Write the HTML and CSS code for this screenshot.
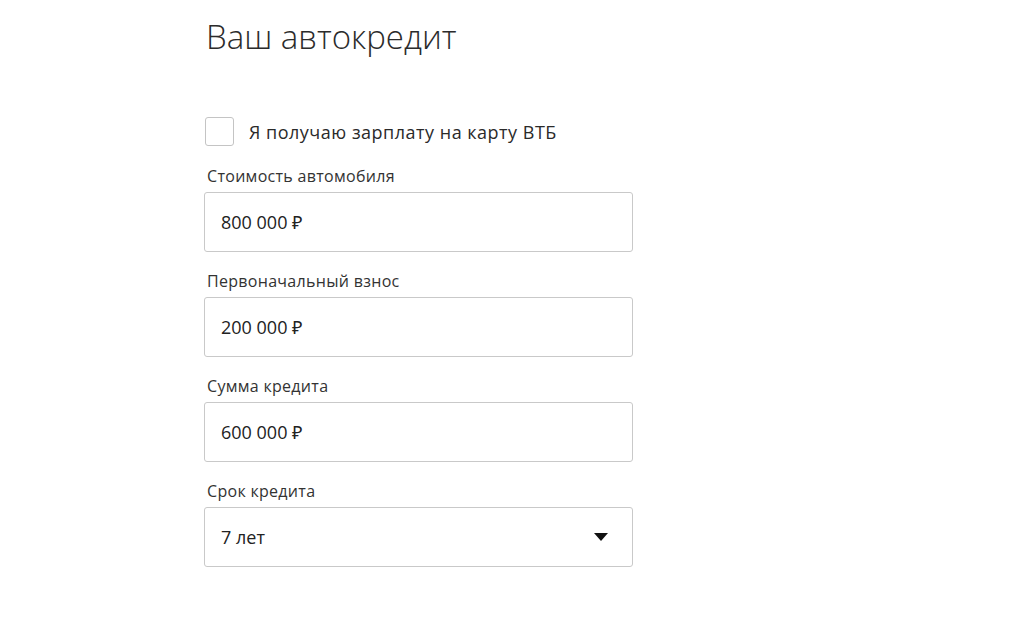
FILE: index.html
```html
<!DOCTYPE html>
<html lang="ru">
<head>
    <meta charset="UTF-8">
    <meta name="viewport" content="width=device-width, initial-scale=1.0">
    <link rel="stylesheet" href="styles.css">
    <title>Ваш автокредит</title>
</head>
<body>
    <div class="calc">
        <h1 class="title">Ваш автокредит</h1>

        <label class="check">
            <span class="box"></span>
            <span class="checkText">Я получаю зарплату на карту ВТБ</span>
        </label>

        <div class="field">
            <div class="label">Стоимость автомобиля</div>
            <div class="input">800 000 ₽</div>
        </div>
        <div class="field">
            <div class="label">Первоначальный взнос</div>
            <div class="input">200 000 ₽</div>
        </div>
        <div class="field">
            <div class="label">Сумма кредита</div>
            <div class="input">600 000 ₽</div>
        </div>
        <div class="field">
            <div class="label">Срок кредита</div>
            <div class="input select">
                <span>7 лет</span>
                <svg class="caret" width="14" height="8" viewBox="0 0 14 8"><path d="M0 0 L14 0 L7 8 Z" fill="#111"/></svg>
            </div>
        </div>
    </div>
</body>
</html>
```

FILE: styles.css
```css
*{
    box-sizing: border-box;
}
body{
    margin: 0;
    padding: 0;
    background-color: #fff;
    color: #222;
    font-family: 'Open Sans', 'Noto Sans', sans-serif;
}

.calc{
    display: flex;
    flex-direction: column;
    padding-left: 204px;
    width: 633px;
}
.title{
    margin: 14px 0 0 2px;
    font-size: 33px;
    font-weight: 300;
    line-height: 46px;
    color: #2b2b2b;
}

.check{
    display: flex;
    align-items: center;
    margin-top: 57px;
    margin-left: 1px;
}
.box{
    width: 29px;
    height: 29px;
    border: 1px solid #c4c4c4;
    border-radius: 3px;
}
.checkText{
    margin-left: 15px;
    font-size: 18px;
    letter-spacing: 0.5px;
    color: #2a2a2a;
}

.field{
    display: flex;
    flex-direction: column;
    margin-top: 19px;
}
.check + .field{
    margin-top: 20px;
}
.label{
    margin-left: 3px;
    font-size: 16px;
    letter-spacing: 0.3px;
    line-height: 20px;
    color: #333;
    margin-bottom: 6px;
}
.input{
    display: flex;
    align-items: center;
    justify-content: space-between;
    width: 429px;
    height: 60px;
    padding: 0 24px 0 16px;
    border: 1px solid #c9c9c9;
    border-radius: 3px;
    font-size: 18px;
    color: #222;
}
.caret{
    display: block;
}
```
